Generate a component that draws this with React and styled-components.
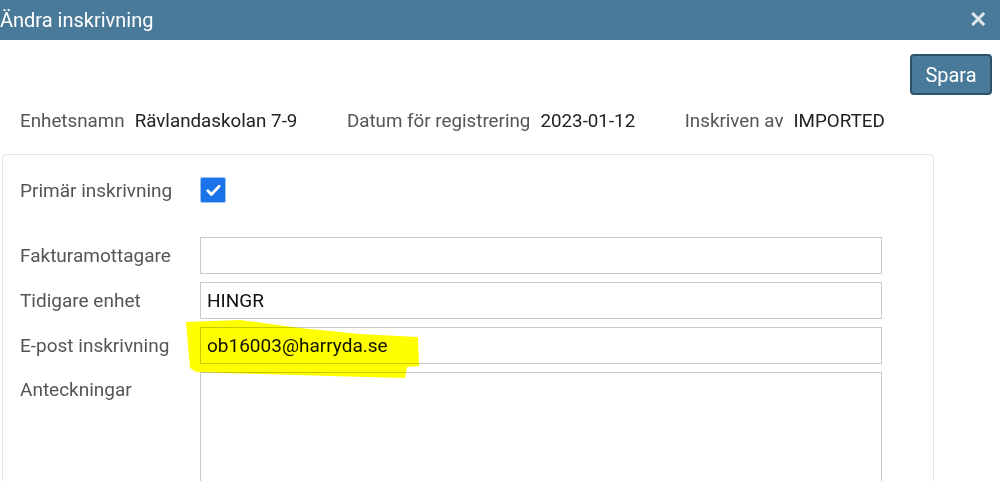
import React from 'react'
import styled, { createGlobalStyle } from 'styled-components'

const GlobalStyle = createGlobalStyle`
  html, body {
    margin: 0;
    padding: 0;
    background: #fff;
    overflow: hidden;
    font-family: Roboto, "Liberation Sans", sans-serif;
  }
`;

const Dialog = styled.div`
  width: 1000px;
  height: 481px;
  position: relative;
  overflow: hidden;
`;

const Header = styled.div`
  height: 40px;
  background: #4a7a99;
  display: flex;
  align-items: center;
  justify-content: space-between;
  padding: 0 13px 0 0;
  box-sizing: border-box;
`;

const Title = styled.div`
  color: #fff;
  font-size: 20px;
`;

const Close = styled.div`
  color: #dfe6ec;
  font-size: 22px;
  font-weight: 700;
  line-height: 1;
`;

const Body = styled.div`
  padding: 14px 8px 0 2px;
`;

const Toolbar = styled.div`
  display: flex;
  justify-content: flex-end;
`;

const Button = styled.button`
  height: 41px;
  width: 82px;
  background: #4a7a99;
  color: #fff;
  font-family: Roboto, "Liberation Sans", sans-serif;
  font-size: 20px;
  border: 2px solid #2c526c;
  border-radius: 4px;
  cursor: pointer;
`;

const InfoRow = styled.div`
  display: flex;
  gap: 49.5px;
  padding-left: 18px;
  height: 52px;
  align-items: center;
  font-size: 18.8px;
`;

const Info = styled.div`
  display: flex;
  gap: 10px;
`;

const Label = styled.span`
  color: #555;
`;

const Value = styled.span`
  color: #222;
`;

const Panel = styled.div`
  margin-top: 7px;
  width: 932px;
  border: 1px solid #e2e2e2;
  border-radius: 4px;
  box-sizing: border-box;
  padding: 22px 51px 0 17px;
  height: 340px;
`;

const Row = styled.div`
  display: grid;
  grid-template-columns: 180px 1fr;
  align-items: ${p => (p.$top ? 'start' : 'center')};
  margin-bottom: ${p => p.$gap || 8}px;
`;

const FieldLabel = styled.div`
  color: #555;
  font-size: 19px;
  padding-top: ${p => p.$pad || 0}px;
`;

const Input = styled.div`
  height: 37px;
  border: 1px solid #c8c8c8;
  box-sizing: border-box;
  display: flex;
  align-items: center;
  padding-left: 6px;
  font-size: 19px;
  color: #111;
`;

const TextArea = styled.div`
  height: 140px;
  border: 1px solid #c8c8c8;
  box-sizing: border-box;
`;

const Check = styled.div`
  width: 26px;
  height: 26px;
  background: #1a73e8;
  border: 1px solid #9cc3ee;
  border-radius: 2px;
  box-sizing: border-box;
  display: flex;
  align-items: center;
  justify-content: center;
`;

const Marker = styled.svg`
  position: absolute;
  left: 0;
  top: 0;
  pointer-events: none;
  mix-blend-mode: multiply;
`;

const fields = [
  { label: 'Fakturamottagare', value: '' },
  { label: 'Tidigare enhet', value: 'HINGR' },
  { label: 'E-post inskrivning', value: 'ob16003@harryda.se' },
]

const App = () => {
  return (
    <Dialog>
      <GlobalStyle />
      <Header>
        <Title>Ändra inskrivning</Title>
        <Close>✕</Close>
      </Header>
      <Body>
        <Toolbar>
          <Button>Spara</Button>
        </Toolbar>
        <InfoRow>
          <Info><Label>Enhetsnamn</Label><Value>Rävlandaskolan 7-9</Value></Info>
          <Info><Label>Datum för registrering</Label><Value>2023-01-12</Value></Info>
          <Info><Label>Inskriven av</Label><Value>IMPORTED</Value></Info>
        </InfoRow>
        <Panel>
          <Row $gap={34}>
            <FieldLabel>Primär inskrivning</FieldLabel>
            <Check>
              <svg width="17" height="17" viewBox="0 0 24 24" fill="none" stroke="#fff" strokeWidth="4" strokeLinecap="round" strokeLinejoin="round">
                <path d="M4 12.5l5 5L20 6" />
              </svg>
            </Check>
          </Row>
          {fields.map(f => (
            <Row key={f.label} $gap={8}>
              <FieldLabel>{f.label}</FieldLabel>
              <Input>{f.value}</Input>
            </Row>
          ))}
          <Row $top>
            <FieldLabel $pad={6}>Anteckningar</FieldLabel>
            <TextArea />
          </Row>
        </Panel>
      </Body>
      <Marker width="1000" height="481">
        <path d="M186 322 L240 320 L300 328 L360 334 L418 337 L419 366 L407 367 L405 378 L330 376 L260 374 L196 372 L190 368 Z" fill="#ffff00" />
      </Marker>
    </Dialog>
  )
}

export default App
